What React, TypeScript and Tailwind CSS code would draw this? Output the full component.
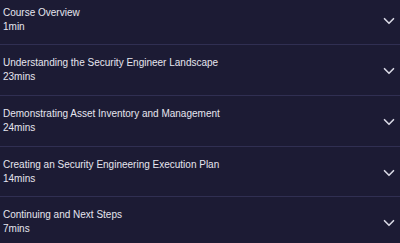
import { ChevronDown } from "lucide-react";

const lessons = [
  { title: "Course Overview", duration: "1min", pad: "pt-[6px] pb-[10px]" },
  { title: "Understanding the Security Engineer Landscape", duration: "23mins", pad: "pt-[11px] pb-[11px]" },
  { title: "Demonstrating Asset Inventory and Management", duration: "24mins", pad: "pt-[11px] pb-[11px]" },
  { title: "Creating an Security Engineering Execution Plan", duration: "14mins", pad: "pt-[11px] pb-[10px]" },
  { title: "Continuing and Next Steps", duration: "7mins", pad: "pt-[11px] pb-[11px]" },
];

export default function App() {
  return (
    <div className="w-[400px] h-[243px] overflow-hidden bg-[#1c1b34] font-['Liberation_Sans',Arial,sans-serif] text-[#e6e6ef]">
      {lessons.map((lesson, index) => (
        <div
          key={index}
          className={`flex items-center justify-between pl-[3px] pr-[2px] border-b border-[#302f52] ${lesson.pad}`}
        >
          <div className="flex flex-col text-[10px] leading-[14px]">
            <span>{lesson.title}</span>
            <span>{lesson.duration}</span>
          </div>
          <ChevronDown size={18} strokeWidth={2.2} className="mt-[2px] text-[#d8d8e4]" />
        </div>
      ))}
    </div>
  );
}
